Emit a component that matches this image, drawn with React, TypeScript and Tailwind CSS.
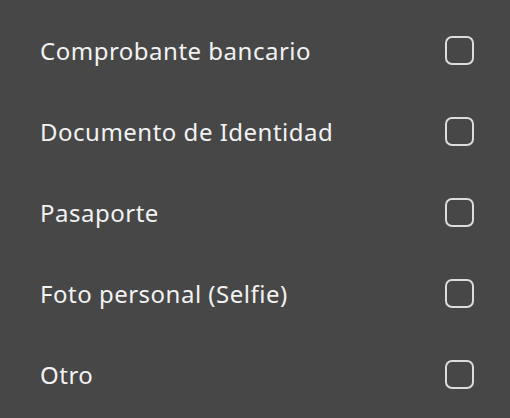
const items = [
  "Comprobante bancario",
  "Documento de Identidad",
  "Pasaporte",
  "Foto personal (Selfie)",
  "Otro",
];

export default function App() {
  return (
    <div className="h-[418px] w-[510px] overflow-hidden bg-[#474747] pt-[10px] font-['Noto_Sans','Open_Sans',sans-serif]">
      {items.map((label) => (
        <label
          key={label}
          className="flex h-[81px] items-center justify-between pl-[40px] pr-[36px]"
        >
          <span className="text-[24px] tracking-[0.5px] text-[#f2f2f2]">{label}</span>
          <span className="h-[29px] w-[29px] rounded-[7px] border-2 border-[#dcdcdc]" />
        </label>
      ))}
    </div>
  );
}
